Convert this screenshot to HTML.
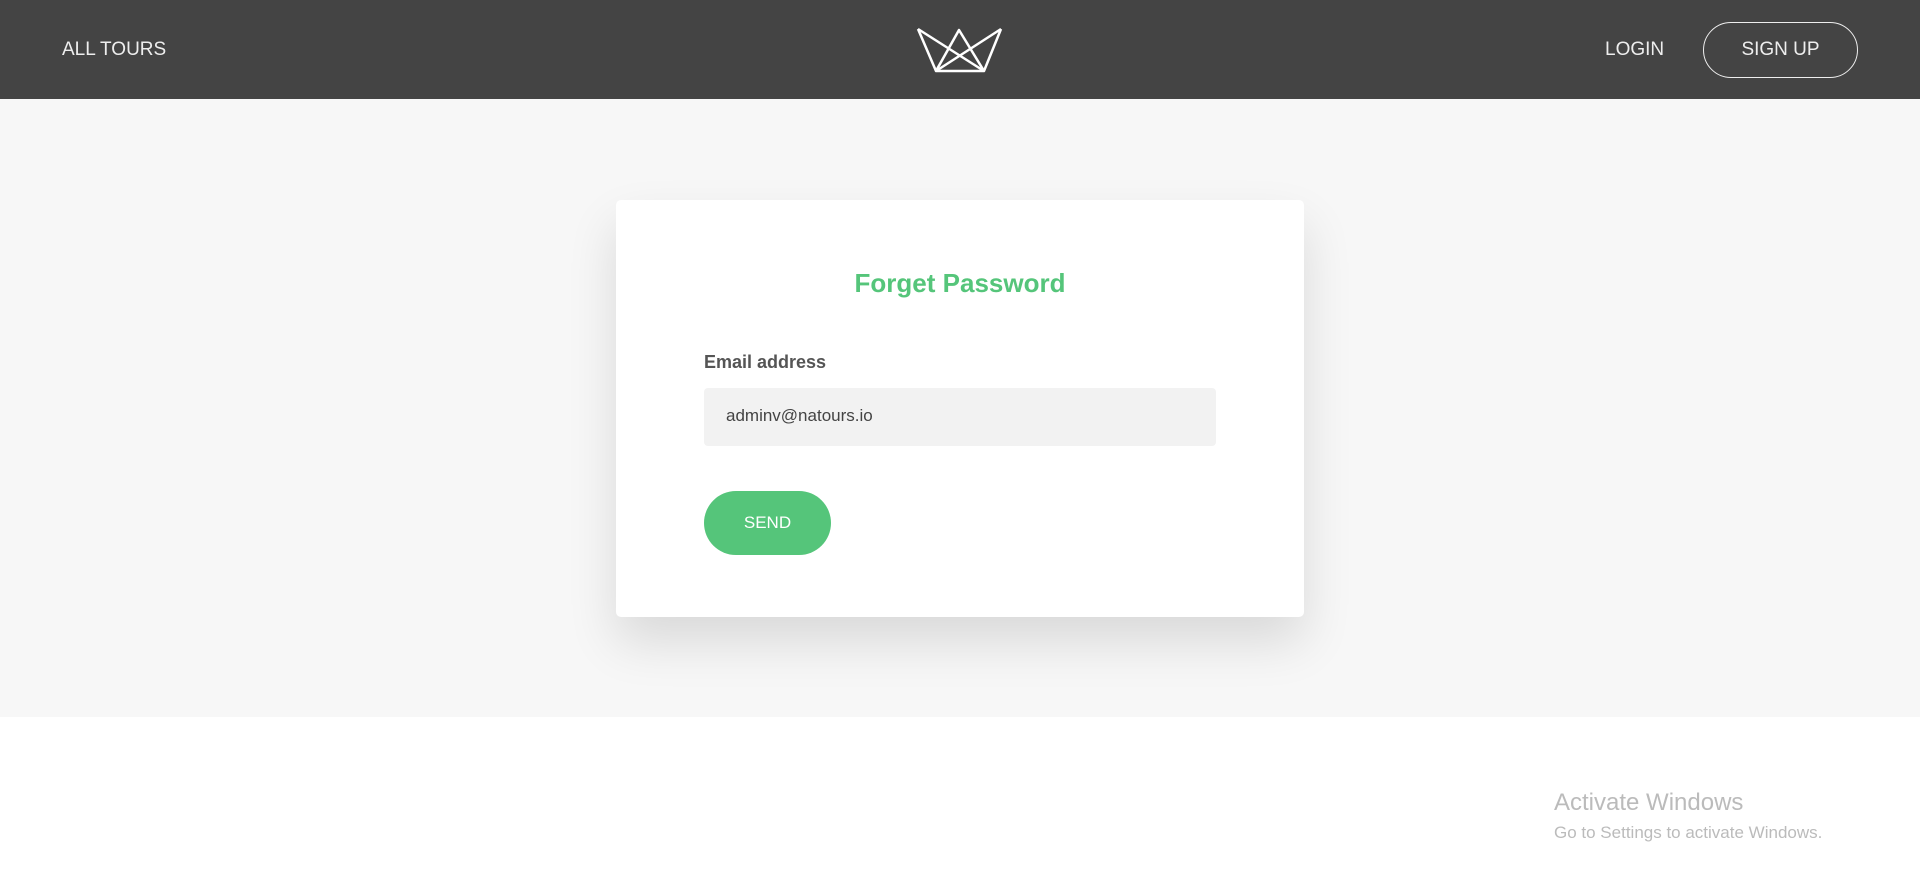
<!DOCTYPE html>
<html><head><meta charset="utf-8"><style>
*{margin:0;padding:0;box-sizing:border-box}
body{width:1920px;height:892px;background:#fff;font-family:"Liberation Sans",sans-serif;position:relative;overflow:hidden}
.hdr{position:absolute;left:0;top:0;width:1920px;height:99px;background:#444}
.nav{position:absolute;color:#eee;font-size:19px;font-weight:300}
.gray{position:absolute;left:0;top:99px;width:1920px;height:618px;background:#f7f7f7}
.card{position:absolute;left:616px;top:200px;width:688px;height:417px;background:#fff;border-radius:5px;box-shadow:0 25px 50px rgba(0,0,0,.12)}
.title{position:absolute;left:0;width:100%;top:268px;text-align:center;color:#55c57a;font-size:26px;font-weight:bold}
.lbl{position:absolute;left:704px;top:352px;font-size:18px;font-weight:bold;color:#555}
.inp{position:absolute;left:704px;top:388px;width:512px;height:58px;background:#f2f2f2;border-radius:4px;font-size:17px;color:#444;padding:18px 22px}
.btn{position:absolute;left:704px;top:491px;width:127px;height:64px;border-radius:32px;background:#55c57a;color:#fff;font-size:17px;text-align:center;line-height:64px}
</style></head><body>
<div class="hdr"></div>
<div class="nav" style="left:62px;top:39px">ALL TOURS</div>
<div class="nav" style="left:1605px;top:39px">LOGIN</div>
<div style="position:absolute;left:1703px;top:22px;width:155px;height:56px;border:1px solid #eee;border-radius:28px;color:#eee;font-size:19px;text-align:center;line-height:54px">SIGN UP</div>
<svg style="position:absolute;left:0;top:0" width="1920" height="100"><g stroke="#fff" stroke-width="2.5" fill="none" stroke-linejoin="round">
<polyline points="918,29 936,71 984,71 1001,29"/>
<line x1="918" y1="29" x2="984" y2="71"/><line x1="1001" y1="29" x2="936" y2="71"/>
<polyline points="936,71 959,30 984,71"/></g></svg>
<div class="gray"></div>
<div class="card"></div>
<div class="title">Forget Password</div>
<div class="lbl">Email address</div>
<div class="inp">adminv@natours.io</div>
<div class="btn">SEND</div>
<div style="position:absolute;left:1554px;top:789px;font-size:24px;color:#bbb">Activate Windows</div>
<div style="position:absolute;left:1554px;top:823px;font-size:17px;color:#bbb">Go to Settings to activate Windows.</div>
</body></html>
